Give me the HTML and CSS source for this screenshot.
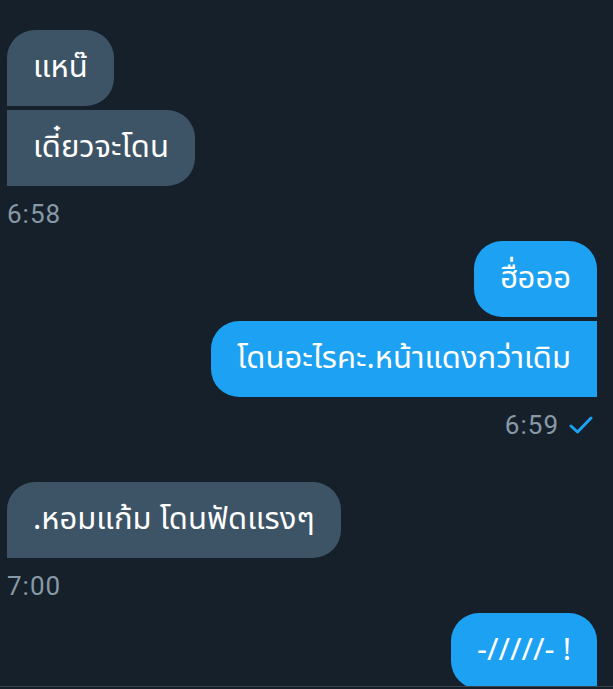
FILE: index.html
```html
<!DOCTYPE html>
<html lang="th">
<head>
    <meta charset="UTF-8">
    <meta name="viewport" content="width=device-width, initial-scale=1.0">
    <title>ข้อความ</title>
    <link rel="stylesheet" href="styles.css">
</head>
<body>
    <div class="chat">
        <div class="group received">
            <div class="bubble first">แหน๊</div>
            <div class="bubble">เดี๋ยวจะโดน</div>
            <div class="meta">6:58</div>
        </div>

        <div class="group sent">
            <div class="bubble first">ฮื่อออ</div>
            <div class="bubble">โดนอะไรคะ.หน้าแดงกว่าเดิม</div>
            <div class="meta">
                <span>6:59</span>
                <svg class="check" width="24" height="18" viewBox="0 0 24 18">
                    <polyline points="2,10 8.5,16 22,2" fill="none" stroke="#1da1f2" stroke-width="3" stroke-linecap="round" stroke-linejoin="round"/>
                </svg>
            </div>
        </div>

        <div class="group received spaced">
            <div class="bubble first">.หอมแก้ม โดนฟัดแรงๆ</div>
            <div class="meta">7:00</div>
        </div>

        <div class="group sent">
            <div class="bubble first">-/////- !</div>
        </div>
    </div>

    <footer class="composer"></footer>
</body>
</html>
```

FILE: styles.css
```css
body {
    margin: 0;
    height: 689px;
    overflow: hidden;
    background-color: #15202b;
    font-family: "Noto Sans Thai", "Noto Sans", Roboto, sans-serif;
}
.chat {
    height: 686px;
    overflow: hidden;
    box-sizing: border-box;
    padding: 30px 16px 0 7px;
    display: flex;
    flex-direction: column;
}
.group {
    display: flex;
    flex-direction: column;
    gap: 4px;
}
.group + .group {
    margin-top: 12px;
}
.group.spaced {
    margin-top: 42px;
}
.received {
    align-items: flex-start;
}
.sent {
    align-items: flex-end;
}
.bubble {
    padding: 19px 26px;
    font-size: 31px;
    line-height: 38px;
    color: #ffffff;
    white-space: nowrap;
}
.received .bubble {
    background-color: #3d5466;
    border-radius: 0 28px 28px 0;
}
.received .bubble.first {
    border-radius: 28px 28px 28px 0;
}
.sent .bubble {
    background-color: #1da1f2;
    border-radius: 28px 0 0 28px;
}
.sent .bubble.first {
    border-radius: 28px 28px 0 28px;
}
.meta {
    margin-top: 9px;
    font-family: Roboto, "Liberation Sans", sans-serif;
    font-size: 26px;
    letter-spacing: 1px;
    line-height: 30px;
    color: #8899a6;
    display: flex;
    align-items: center;
    gap: 10px;
}
.sent .meta {
    padding-right: 4px;
}
.composer {
    height: 3px;
    border-top: 1px solid #38444d;
    box-sizing: border-box;
}
```
